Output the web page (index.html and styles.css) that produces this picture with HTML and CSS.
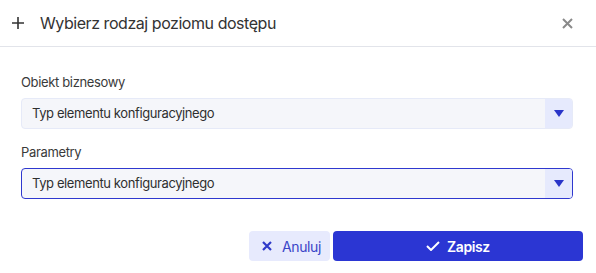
FILE: index.html
```html
<!DOCTYPE html>
<html lang="pl">
<head>
  <meta charset="UTF-8" />
  <meta name="viewport" content="width=device-width, initial-scale=1.0">
  <title>Wybierz rodzaj poziomu dostępu</title>
  <link rel="stylesheet" href="styles.css">
</head>
<body>
  <div class="dialog">
    <div class="dialog-header">
      <svg class="plus-icon" width="12" height="12" viewBox="0 0 12 12">
        <path d="M6 0v12M0 6h12" stroke="#333" stroke-width="1.6" fill="none"/>
      </svg>
      <h1>Wybierz rodzaj poziomu dostępu</h1>
      <svg class="close-icon" width="11" height="11" viewBox="0 0 11 11">
        <path d="M1 1l9 9M10 1l-9 9" stroke="#8a8a8a" stroke-width="2" fill="none"/>
      </svg>
    </div>

    <div class="dialog-body">
      <div class="field">
        <label>Obiekt biznesowy</label>
        <div class="select">
          <span class="select-value">Typ elementu konfiguracyjnego</span>
          <span class="select-arrow"><i></i></span>
        </div>
      </div>
      <div class="field">
        <label>Parametry</label>
        <div class="select active">
          <span class="select-value">Typ elementu konfiguracyjnego</span>
          <span class="select-arrow"><i></i></span>
        </div>
      </div>
    </div>

    <div class="dialog-footer">
      <button class="btn btn-cancel">
        <svg width="10" height="10" viewBox="0 0 10 10">
          <path d="M1 1l8 8M9 1l-8 8" stroke="#2f3ac9" stroke-width="2.2" fill="none"/>
        </svg>
        Anuluj
      </button>
      <button class="btn btn-save">
        <svg width="14" height="10" viewBox="0 0 14 10">
          <path d="M1 5l4 4 8-8" stroke="#fff" stroke-width="2" fill="none"/>
        </svg>
        Zapisz
      </button>
    </div>
  </div>
</body>
</html>
```

FILE: styles.css
```css
body {
  font-family: 'Inter', 'Noto Sans', sans-serif;
  background: #fff;
  color: #333;
  margin: 0;
}
.dialog {
  width: 596px;
  height: 273px;
  display: flex;
  flex-direction: column;
}
.dialog-header {
  height: 47px;
  display: flex;
  align-items: center;
  padding: 0 23px 0 12px;
  border-bottom: 1px solid #e2e4ea;
  box-sizing: border-box;
}
.dialog-header h1 {
  flex: 1;
  margin: 0 0 0 16px;
  font-size: 16px;
  font-weight: 400;
  color: #333;
  letter-spacing: -0.45px;
}
.close-icon {
  margin-top: 1px;
}
.dialog-body {
  padding: 27px 23px 0 21px;
}
.field {
  margin-bottom: 15px;
}
.field:last-child {
  margin-bottom: 0;
}
.field label {
  display: block;
  font-size: 13px;
  color: #3a3a3a;
  line-height: 16px;
  margin-bottom: 8px;
  letter-spacing: -0.35px;
}
.select {
  height: 31px;
  display: flex;
  border: 1px solid #e6eaf8;
  border-radius: 4px;
  background: #f5f6fa;
  box-sizing: border-box;
  overflow: hidden;
}
.select.active {
  border-color: #2f38cf;
}
.select-value {
  flex: 1;
  padding-left: 10px;
  font-size: 13px;
  line-height: 29px;
  color: #2f2f2f;
  letter-spacing: -0.4px;
}
.select-arrow {
  width: 27px;
  background: #e6eafd;
  display: flex;
  align-items: center;
  justify-content: center;
}
.select-arrow i {
  width: 0;
  height: 0;
  border-left: 5px solid transparent;
  border-right: 5px solid transparent;
  border-top: 7px solid #2a35c9;
}
.dialog-footer {
  display: flex;
  justify-content: flex-end;
  gap: 3px;
  padding: 0 13px 0 0;
  margin-top: 32px;
}
.btn {
  height: 30px;
  border: none;
  border-radius: 4px;
  font-family: inherit;
  font-size: 14px;
  display: flex;
  align-items: center;
  justify-content: center;
  letter-spacing: -0.4px;
}
.btn-cancel {
  width: 81px;
  gap: 10px;
  background: #e7eafd;
  color: #3a45c8;
  padding-left: 10px;
}
.btn-save {
  width: 250px;
  gap: 7px;
  background: #2b36d3;
  color: #fff;
  font-weight: 600;
}
```
